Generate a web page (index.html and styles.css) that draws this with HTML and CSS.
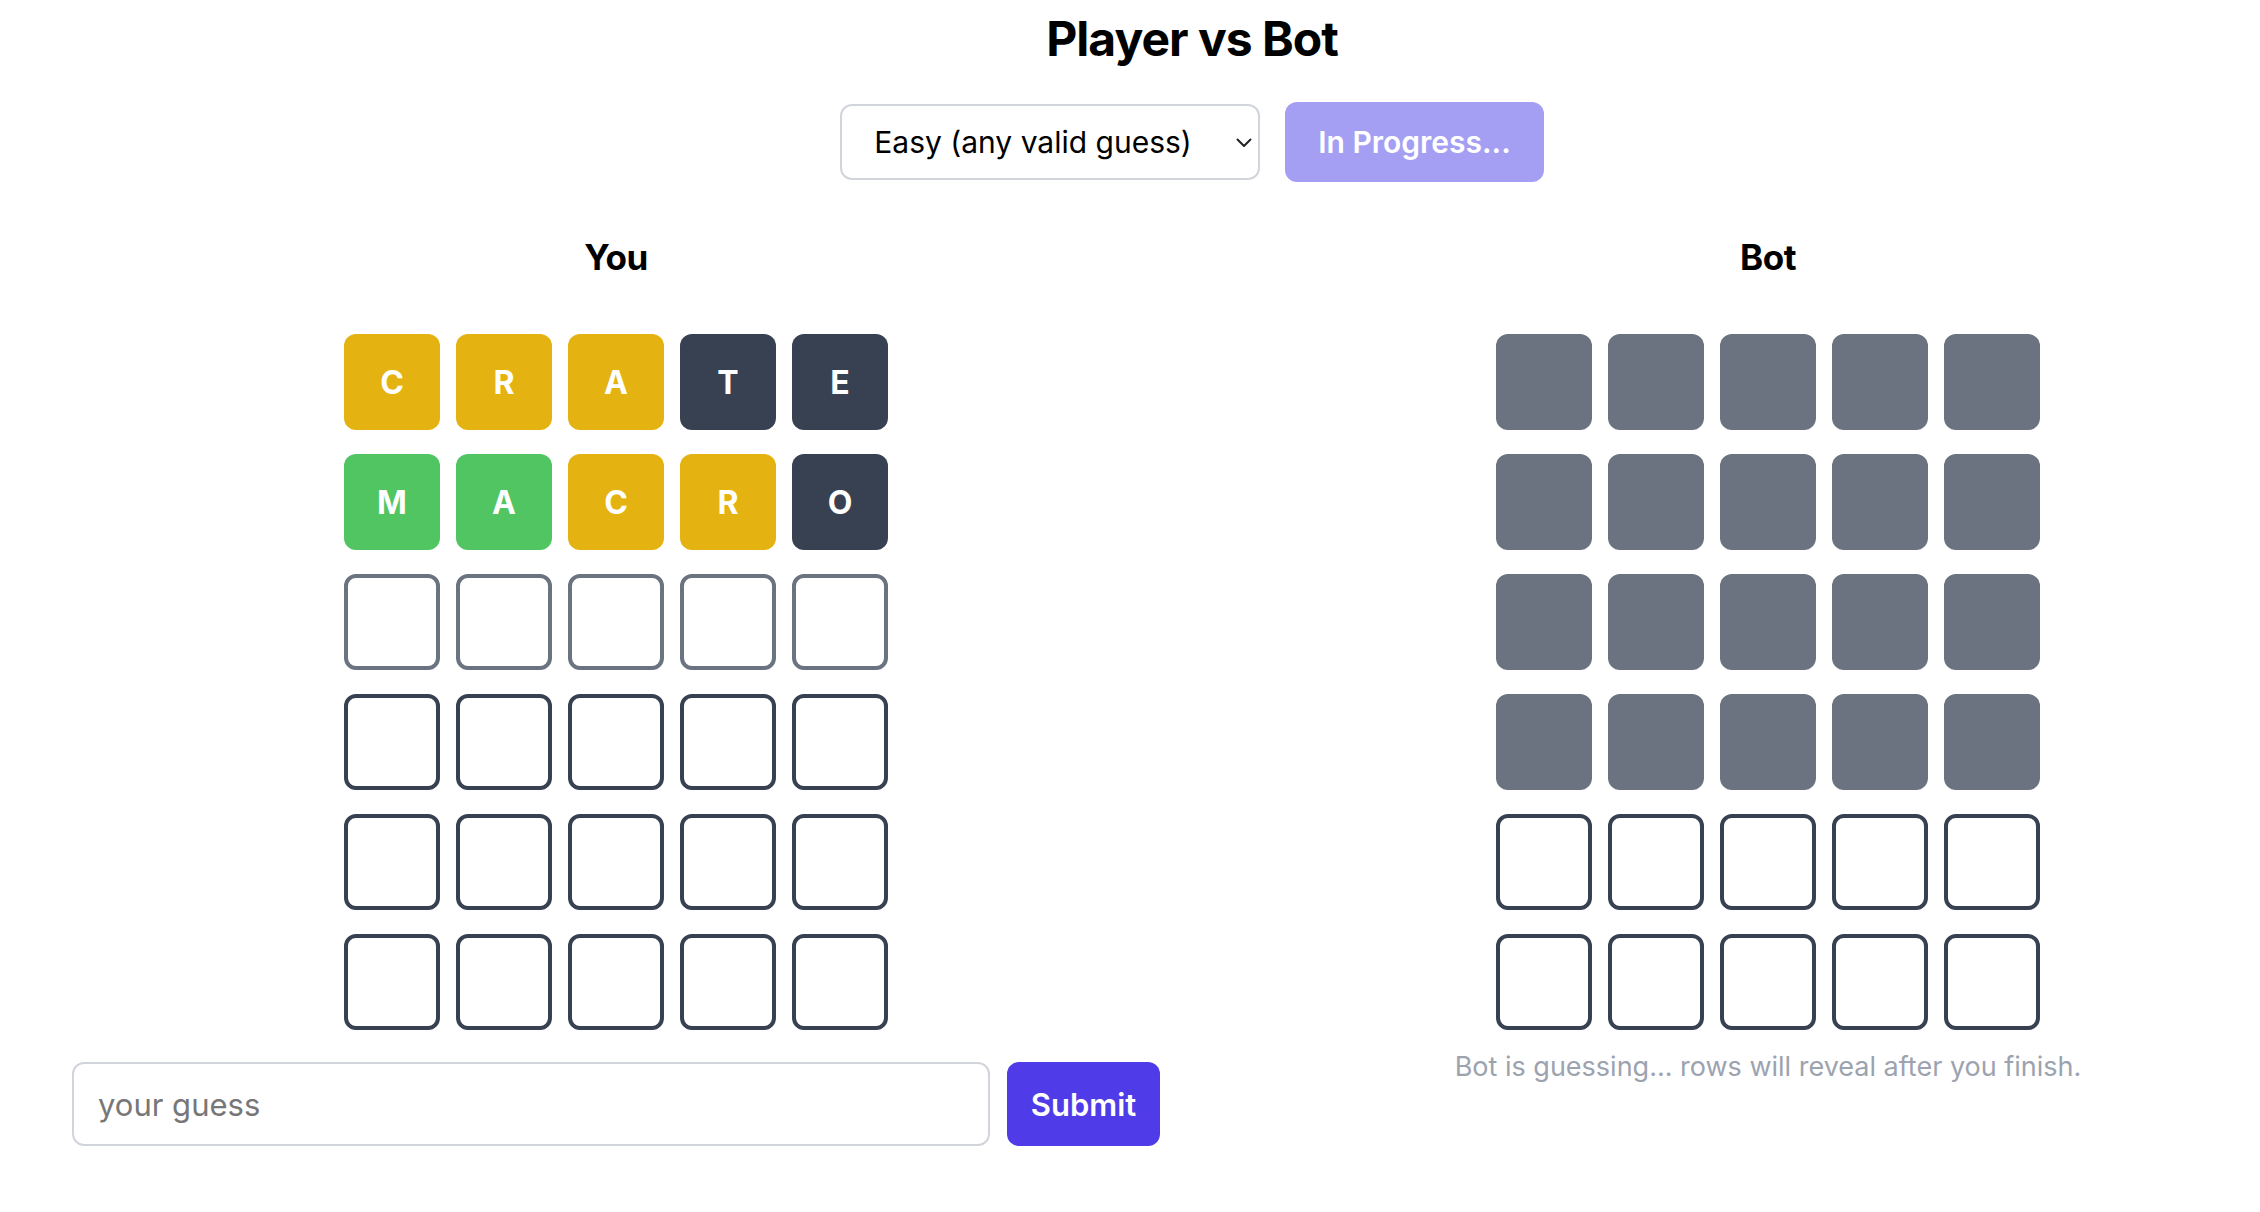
FILE: index.html
```html
<!DOCTYPE html>
<html lang="en">
<head>
<meta charset="utf-8">
<title>Player vs Bot</title>
<link rel="stylesheet" href="styles.css">
</head>
<body>
<div class="page">
  <h1 class="title">Player vs Bot</h1>
  <div class="controls">
    <div class="select-wrap">
      <select class="mode">
        <option>Easy (any valid guess)</option>
      </select>
      <svg class="chevron" width="16" height="10" viewBox="0 0 16 10"><path d="M1.5 1.5 L8 8 L14.5 1.5" fill="none" stroke="#222" stroke-width="2" stroke-linecap="round" stroke-linejoin="round"/></svg>
    </div>
    <button class="btn-progress">In Progress...</button>
  </div>
  <div class="boards">
    <section class="col">
      <h2 class="col-title">You</h2>
      <div class="grid">
        <div class="tile yellow">C</div><div class="tile yellow">R</div><div class="tile yellow">A</div><div class="tile dark">T</div><div class="tile dark">E</div>
        <div class="tile green">M</div><div class="tile green">A</div><div class="tile yellow">C</div><div class="tile yellow">R</div><div class="tile dark">O</div>
        <div class="tile current"></div><div class="tile current"></div><div class="tile current"></div><div class="tile current"></div><div class="tile current"></div>
        <div class="tile empty"></div><div class="tile empty"></div><div class="tile empty"></div><div class="tile empty"></div><div class="tile empty"></div>
        <div class="tile empty"></div><div class="tile empty"></div><div class="tile empty"></div><div class="tile empty"></div><div class="tile empty"></div>
        <div class="tile empty"></div><div class="tile empty"></div><div class="tile empty"></div><div class="tile empty"></div><div class="tile empty"></div>
      </div>
      <div class="input-row">
        <input class="guess" type="text" placeholder="your guess">
        <button class="btn-submit">Submit</button>
      </div>
    </section>
    <section class="col">
      <h2 class="col-title">Bot</h2>
      <div class="grid">
        <div class="tile hidden"></div><div class="tile hidden"></div><div class="tile hidden"></div><div class="tile hidden"></div><div class="tile hidden"></div>
        <div class="tile hidden"></div><div class="tile hidden"></div><div class="tile hidden"></div><div class="tile hidden"></div><div class="tile hidden"></div>
        <div class="tile hidden"></div><div class="tile hidden"></div><div class="tile hidden"></div><div class="tile hidden"></div><div class="tile hidden"></div>
        <div class="tile hidden"></div><div class="tile hidden"></div><div class="tile hidden"></div><div class="tile hidden"></div><div class="tile hidden"></div>
        <div class="tile empty"></div><div class="tile empty"></div><div class="tile empty"></div><div class="tile empty"></div><div class="tile empty"></div>
        <div class="tile empty"></div><div class="tile empty"></div><div class="tile empty"></div><div class="tile empty"></div><div class="tile empty"></div>
      </div>
      <p class="bot-msg">Bot is guessing... rows will reveal after you finish.</p>
    </section>
  </div>
</div>
</body>
</html>
```

FILE: styles.css
```css
html, body {
  margin: 0;
  padding: 0;
  overflow: hidden;
  background: #ffffff;
}

body {
  font-family: Inter, "Noto Sans", "DejaVu Sans", sans-serif;
  color: #000;
}

.page {
  width: 2304px;
  margin-left: 40px;
  padding-top: 7px;
}

.title {
  margin: 0;
  text-align: center;
  font-size: 48px;
  line-height: 64px;
  font-weight: 700;
  letter-spacing: -1px;
}

.controls {
  margin-top: 31px;
  display: flex;
  justify-content: center;
  align-items: center;
  gap: 25px;
}

.select-wrap {
  position: relative;
}

.mode {
  appearance: none;
  -webkit-appearance: none;
  width: 420px;
  height: 76px;
  box-sizing: border-box;
  border: 2px solid #d1d5db;
  border-radius: 12px;
  background: #fff;
  padding: 0 32px;
  font-family: Inter, sans-serif;
  font-size: 30px;
  color: #000;
  display: block;
}

.chevron {
  position: absolute;
  right: 8px;
  top: 34px;
  pointer-events: none;
}

.btn-progress {
  height: 80px;
  padding: 0 33px;
  border: none;
  border-radius: 12px;
  background: #a59ff4;
  color: #fff;
  font-family: Inter, sans-serif;
  font-size: 30px;
  font-weight: 600;
}

.boards {
  margin-top: 47px;
  display: grid;
  grid-template-columns: 1152px 1152px;
}

.col {
  padding: 0 32px;
  display: flex;
  flex-direction: column;
  align-items: center;
}

.col-title {
  margin: 0 0 49px;
  font-size: 35px;
  line-height: 56px;
  font-weight: 700;
  letter-spacing: -0.5px;
}

.grid {
  display: grid;
  grid-template-columns: repeat(5, 96px);
  grid-auto-rows: 96px;
  column-gap: 16px;
  row-gap: 24px;
}

.tile {
  box-sizing: border-box;
  border-radius: 12px;
  display: flex;
  align-items: center;
  justify-content: center;
  color: #fff;
  font-size: 32px;
  font-weight: 700;
}

.yellow { background: #e4b312; }
.green { background: #50c562; }
.dark { background: #374151; }
.hidden { background: #6b7280; }
.current { border: 4px solid #6b7280; }
.empty { border: 4px solid #374151; }

.input-row {
  margin-top: 32px;
  align-self: stretch;
  display: flex;
  gap: 17px;
}

.guess {
  flex: 1;
  height: 84px;
  box-sizing: border-box;
  border: 2px solid #d1d5db;
  border-radius: 12px;
  padding: 0 24px;
  font-family: Inter, sans-serif;
  font-size: 31px;
  color: #000;
  outline: none;
}

.guess::placeholder {
  color: #777777;
}

.btn-submit {
  width: 153px;
  height: 84px;
  border: none;
  border-radius: 12px;
  background: #4f3ce8;
  color: #fff;
  font-family: Inter, sans-serif;
  font-size: 31px;
  font-weight: 600;
}

.bot-msg {
  margin: 17px 0 0;
  color: #9ca3af;
  font-size: 27px;
  line-height: 40px;
}
```
